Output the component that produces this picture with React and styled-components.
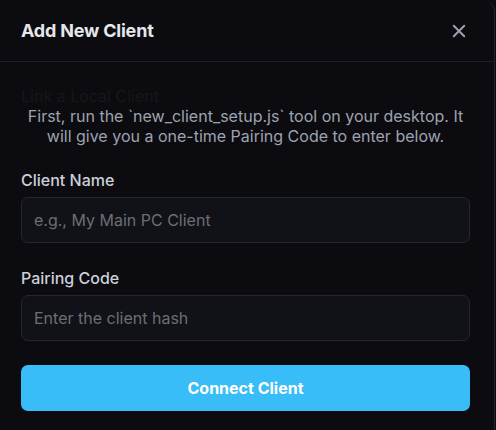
import React, { useState } from "react";
import styled, { createGlobalStyle } from "styled-components";

const GlobalStyle = createGlobalStyle`
  html, body {
    margin: 0;
    padding: 0;
    background: #0c0c10;
  }
  body {
    font-family: Inter, "Noto Sans", sans-serif;
  }
  * { box-sizing: border-box; }
`;

const Modal = styled.div`
  width: 495px;
  height: 430px;
  background: #0c0c10;
  border-right: 1px solid #24252c;
  border-top-right-radius: 12px;
  overflow: hidden;
`;

const Header = styled.div`
  height: 62px;
  display: flex;
  align-items: center;
  justify-content: space-between;
  padding: 0 24px 0 21px;
  border-bottom: 1px solid #1f2027;
`;

const Title = styled.h2`
  margin: 0;
  font-size: 18px;
  font-weight: 700;
  color: #e5e7eb;
  letter-spacing: -0.2px;
`;

const CloseButton = styled.button`
  background: none;
  border: none;
  padding: 0;
  width: 22px;
  height: 22px;
  display: flex;
  align-items: center;
  justify-content: center;
  color: #9ca3af;
  cursor: pointer;
`;

const Body = styled.div`
  padding: 24px 24px 0 21px;
`;

const Section = styled.h3`
  margin: 0;
  font-size: 16px;
  font-weight: 400;
  line-height: 20px;
  color: #16161b;
`;

const Description = styled.p`
  margin: 0 0 24px;
  font-size: 16px;
  line-height: 20px;
  color: #9ca3af;
  text-align: center;
`;

const Field = styled.div`
  display: flex;
  flex-direction: column;
  gap: 7px;
  margin-bottom: 25px;
`;

const Label = styled.label`
  font-size: 16px;
  font-weight: 500;
  color: #cbd0d8;
  line-height: 20px;
`;

const Input = styled.input`
  height: 46px;
  width: 100%;
  padding: 0 12px;
  background: #111217;
  border: 1px solid #26272e;
  border-radius: 7px;
  font-family: inherit;
  font-size: 16px;
  color: #e5e7eb;
  outline: none;

  &::placeholder {
    color: #6b6e75;
  }
`;

const SubmitButton = styled.button`
  width: 100%;
  height: 46px;
  margin-top: -1px;
  background: #38bdf8;
  border: none;
  border-radius: 7px;
  color: #ffffff;
  font-family: inherit;
  font-size: 16px;
  font-weight: 700;
  cursor: pointer;
`;

export default function App() {
  const [name, setName] = useState("");
  const [code, setCode] = useState("");

  return (
    <>
      <GlobalStyle />
      <Modal>
        <Header>
          <Title>Add New Client</Title>
          <CloseButton aria-label="Close">
            <svg width="18" height="18" viewBox="0 0 24 24" fill="none" stroke="currentColor" strokeWidth="2.6" strokeLinecap="round">
              <path d="M5 5l14 14M19 5L5 19" />
            </svg>
          </CloseButton>
        </Header>
        <Body>
          <Section>Link a Local Client</Section>
          <Description>
            First, run the `new_client_setup.js` tool on your desktop. It will give you a one-time Pairing Code to enter below.
          </Description>
          <Field>
            <Label>Client Name</Label>
            <Input placeholder="e.g., My Main PC Client" value={name} onChange={(e) => setName(e.target.value)} />
          </Field>
          <Field>
            <Label>Pairing Code</Label>
            <Input placeholder="Enter the client hash" value={code} onChange={(e) => setCode(e.target.value)} />
          </Field>
          <SubmitButton>Connect Client</SubmitButton>
        </Body>
      </Modal>
    </>
  );
}
